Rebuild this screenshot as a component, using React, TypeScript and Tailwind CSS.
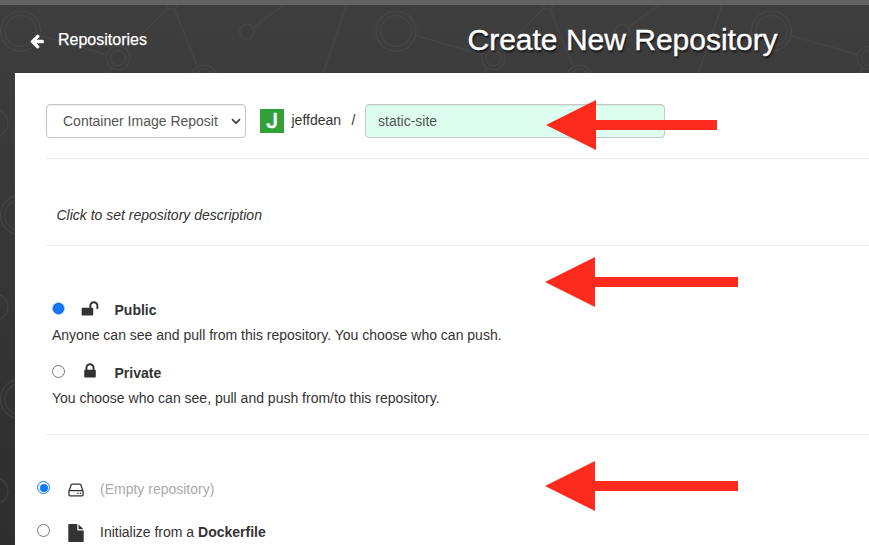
import type { ReactNode } from 'react';

function Backdrop() {
  return (
    <svg className="absolute inset-0 h-full w-full" fill="none" stroke="#4b4b4b" strokeWidth="1">
      <defs>
        <pattern id="nodes" width="375.5" height="184" patternUnits="userSpaceOnUse">
          <g strokeWidth="1.1">
            <circle cx="20.5" cy="31" r="20" />
            <circle cx="20.5" cy="31" r="15.5" />
            <path d="M40 35.500 106 54.500M126 49.500 168 8.500M174.500 9.500 197 65M253.500 27 290 0M348 0 323 73M111.500 68 109 73" />
            <circle cx="118" cy="58" r="11.700" />
            <circle cx="118" cy="58" r="7.500" />
            <circle cx="172" cy="4" r="5.500" />
            <circle cx="204" cy="78" r="13" />
            <circle cx="204" cy="78" r="9" />
            <circle cx="247" cy="31.500" r="7.300" />
            <circle cx="-5" cy="123" r="13" />
          </g>
        </pattern>
      </defs>
      <rect width="100%" height="100%" fill="url(#nodes)" stroke="none" opacity="0.65" />
    </svg>
  );
}

function Glyph({ d, className }: { d: string; className: string }) {
  return (
    <svg viewBox="0 0 1792 1792" fill="currentColor" className={className}>
      <path d={d} />
    </svg>
  );
}

const ARROW =
  'M1664 896v128q0 53-32.5 90.5t-84.5 37.5h-704l293 294q38 36 38 90t-38 90l-75 76q-37 37-90 37-52 0-91-37l-651-652q-37-37-37-90 0-52 37-91l651-650q38-38 91-38 52 0 90 38l75 74q38 38 38 91t-38 91l-293 293h704q52 0 84.5 37.5t32.5 90.5z';
const UNLOCK =
  'M1728 576v256q0 26-19 45t-45 19h-64q-26 0-45-19t-19-45v-256q0-106-75-181t-181-75-181 75-75 181v192h96q40 0 68 28t28 68v576q0 40-28 68t-68 28h-960q-40 0-68-28t-28-68v-576q0-40 28-68t68-28h672v-192q0-185 131.500-316.500t316.500-131.500 316.500 131.500 131.500 316.500z';
const LOCK =
  'M640 768h512v-192q0-106-75-181t-181-75-181 75-75 181v192zm832 96v576q0 40-28 68t-68 28h-960q-40 0-68-28t-28-68v-576q0-40 28-68t68-28h32v-192q0-184 132-316t316-132 316 132 132 316v192h32q40 0 68 28t28 68z';
const DRIVE =
  'M1168 1216q0 33-23.500 56.500t-56.500 23.500-56.500-23.500-23.500-56.500 23.500-56.500 56.500-23.500 56.500 23.500 23.500 56.500zm256 0q0 33-23.500 56.500t-56.500 23.500-56.500-23.500-23.500-56.500 23.500-56.500 56.500-23.500 56.500 23.500 23.500 56.500zm112 160v-320q0-13-9.500-22.500t-22.500-9.500h-1216q-13 0-22.500 9.500t-9.500 22.500v320q0 13 9.500 22.500t22.500 9.500h1216q13 0 22.500-9.500t9.500-22.500zm-1230-480h1180l-157-482q-4-13-16-21.500t-26-8.500h-782q-14 0-26 8.500t-16 21.500zm1358 160v320q0 66-47 113t-113 47h-1216q-66 0-113-47t-47-113v-320q0-25 16-75l197-606q17-53 63-86t101-33h782q55 0 101 33t63 86l197 606q16 50 16 75z';
const FILE =
  'M1152 512v-472q22 14 36 28l408 408q14 14 28 36h-472zm-128 32q0 40 28 68t68 28h544v1056q0 40-28 68t-68 28h-1344q-40 0-68-28t-28-68v-1600q0-40 28-68t68-28h800v544z';

function Radio({ state }: { state: 'off' | 'on' | 'pressed' }) {
  if (state === 'pressed') {
    return <span className="block size-[13px] shrink-0 rounded-full border border-[#a9cdf8] bg-[#1478fa] shadow-[inset_0_0_0_1px_#0b5fd0]" />;
  }
  if (state === 'on') {
    return (
      <span className="flex size-[13px] shrink-0 items-center justify-center rounded-full border-[1.500px] border-[#1078ff] bg-white">
        <span className="block size-[8px] shrink-0 rounded-full bg-[#1078ff]" />
      </span>
    );
  }
  return <span className="block size-[13px] shrink-0 rounded-full border border-[#767676] bg-white" />;
}

function Visibility({ state, icon, title, children }: { state: 'off' | 'pressed'; icon: ReactNode; title: string; children: ReactNode }) {
  return (
    <div className="h-[63px] pl-1.5">
      <div className="flex h-5 items-start">
        <div className="pt-[2px]">
          <Radio state={state} />
        </div>
        <div className="flex w-[49.500px] justify-center">{icon}</div>
        <b className="leading-5">{title}</b>
      </div>
      <p className="pt-[5px] leading-5">{children}</p>
    </div>
  );
}

function Pointer({ className, length }: { className: string; length: number }) {
  return (
    <svg className={`absolute ${className}`} width={length} height="50" fill="#fd2b1d">
      <path d={`M0 25 50 0V20H${length}V30H50V50Z`} />
    </svg>
  );
}

export default function App() {
  return (
    <div className="relative flex h-[545px] w-[869px] flex-col overflow-hidden bg-linear-to-b from-[#3e3e3e] to-[#2e2e2e] font-['Liberation_Sans',Arial,sans-serif] text-sm text-[#333]">
      <Backdrop />
      <div className="relative h-[5px] shrink-0 bg-[#626262]" />
      <header className="relative flex h-[68px] shrink-0 items-center text-white">
        <a className="flex w-[467.500px] items-center pt-[2px] pl-[29px] text-base [-webkit-text-stroke:0.25px_white]">
          <Glyph d={ARROW} className="mt-[1px] size-4" />
          <span className="ml-[13px]">Repositories</span>
        </a>
        <h1 className="pt-[2px] whitespace-nowrap text-[30px] leading-[34px] [-webkit-text-stroke:0.4px_white] [text-shadow:1px_2px_2px_#111]">Create New Repository</h1>
      </header>

      <main className="relative ml-[15px] flex-1 bg-white pl-[31px]">
        <section className="flex h-[86px] items-start border-b border-[#eee] pt-[31px]">
          <div className="flex h-[34px] w-[200px] items-center rounded border border-[#c6c6c6] pr-[2px] pl-4 text-[#555] shadow-[inset_0_1px_1px_#0001]">
            <span className="w-[155px] whitespace-nowrap">Container Image Reposit</span>
            <svg viewBox="0 0 10 7" className="ml-[13px] h-[7px] w-[10px] shrink-0" fill="none" stroke="#444" strokeWidth="1.8">
              <path d="M1 1.200 5 5.200 9 1.200" />
            </svg>
          </div>
          <div className="mt-[5px] ml-[14px] flex size-6 items-center justify-center bg-[#31a038] font-['Open_Sans','Liberation_Sans',sans-serif] text-white">
            <span className="font-['Roboto','Liberation_Sans',sans-serif] text-[21px] leading-6 font-medium [-webkit-text-stroke:0.4px_white]">J</span>
          </div>
          <span className="mt-[6px] ml-[7.500px] w-[60px] leading-5">jeffdean</span>
          <span className="mt-[6px] w-[13.500px] leading-5">/</span>
          <div className="flex h-[34px] w-[300px] items-center rounded border border-[#c6c6c6] bg-[#ddfeee] pl-3 text-[#555] shadow-[inset_0_1px_1px_#0001]">static-site</div>
        </section>

        <section className="h-[87px] border-b border-[#eee] pt-[46px] pl-[10.500px] italic leading-5">Click to set repository description</section>

        <section className="h-[189px] border-b border-[#eee] pt-[54px]">
          <Visibility state="pressed" icon={<Glyph d={UNLOCK} className="size-[18px]" />} title="Public">
            Anyone can see and pull from this repository. You choose who can push.
          </Visibility>
          <Visibility state="off" icon={<Glyph d={LOCK} className="-mt-px size-[18px]" />} title="Private">
            You choose who can see, pull and push from/to this repository.
          </Visibility>
        </section>

        <section className="-ml-[9px] pt-[44px]">
          <div className="flex h-[43px] items-start">
            <div className="pt-[2px]"><Radio state="on" /></div>
            <Glyph d={DRIVE} className="mt-[1.500px] ml-[16.500px] size-[18px]" />
            <span className="ml-[15.500px] leading-5 text-[#aaa]">(Empty repository)</span>
          </div>
          <div className="flex h-[24px] items-start">
            <div className="pt-[2px]"><Radio state="off" /></div>
            <Glyph d={FILE} className="mt-[1.500px] ml-[16.500px] size-[18px]" />
            <span className="ml-[15.500px] leading-5">Initialize from a <b>Dockerfile</b></span>
          </div>
        </section>
      </main>

      <Pointer className="top-[100px] left-[546px]" length={171} />
      <Pointer className="top-[257px] left-[545px]" length={193} />
      <Pointer className="top-[461px] left-[545px]" length={193} />
    </div>
  );
}
